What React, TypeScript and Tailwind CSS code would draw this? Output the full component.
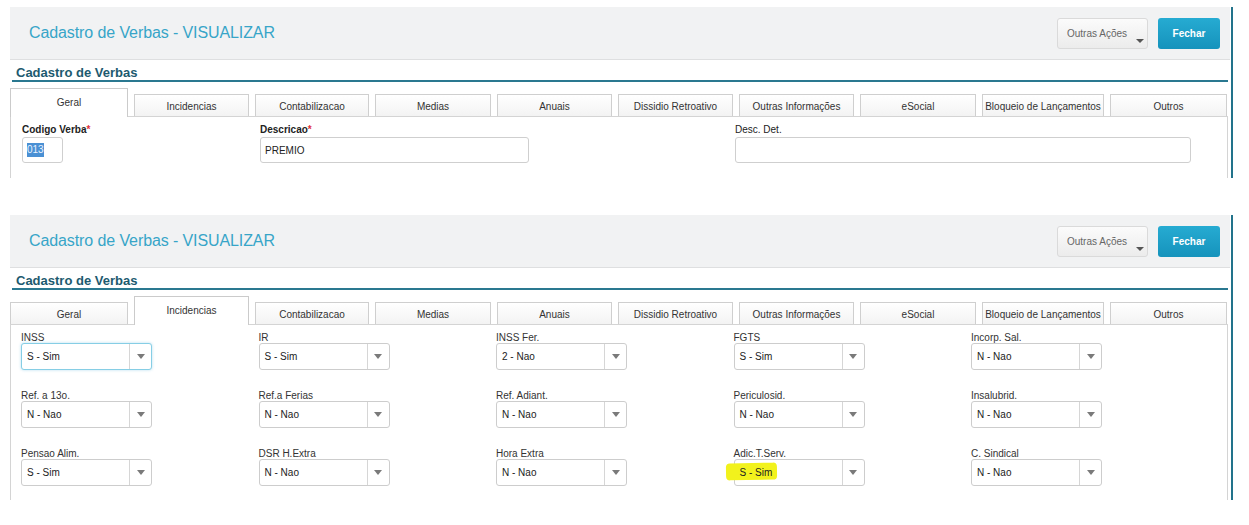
import React from 'react'

const TABS = [
  { label: 'Geral', w: 'w-[118px]' },
  { label: 'Incidencias', w: 'w-[115px]' },
  { label: 'Contabilizacao', w: 'w-[114px]' },
  { label: 'Medias', w: 'w-[116px]' },
  { label: 'Anuais', w: 'w-[115px]' },
  { label: 'Dissidio Retroativo', w: 'w-[115px]' },
  { label: 'Outras Informações', w: 'w-[115px]' },
  { label: 'eSocial', w: 'w-[116px]' },
  { label: 'Bloqueio de Lançamentos', w: 'w-[122px]' },
  { label: 'Outros', w: 'w-[117px]' },
]

const INCIDENCIAS = [
  { label: 'INSS', value: 'S - Sim', focused: true },
  { label: 'IR', value: 'S - Sim' },
  { label: 'INSS Fer.', value: '2 - Nao' },
  { label: 'FGTS', value: 'S - Sim' },
  { label: 'Incorp. Sal.', value: 'N - Nao' },
  { label: 'Ref. a 13o.', value: 'N - Nao' },
  { label: 'Ref.a Ferias', value: 'N - Nao' },
  { label: 'Ref. Adiant.', value: 'N - Nao' },
  { label: 'Periculosid.', value: 'N - Nao' },
  { label: 'Insalubrid.', value: 'N - Nao' },
  { label: 'Pensao Alim.', value: 'S - Sim' },
  { label: 'DSR H.Extra', value: 'N - Nao' },
  { label: 'Hora Extra', value: 'N - Nao' },
  { label: 'Adic.T.Serv.', value: 'S - Sim', marked: true },
  { label: 'C. Sindical', value: 'N - Nao' },
]

function Header() {
  return (
    <>
      <div className="h-[53px] bg-[#f1f2f3] border-b border-[#dedfe0] flex items-center justify-between pl-[19px] pr-[10px]">
        <span className="text-[16px] tracking-[-0.1px] text-[#37a5c8]">Cadastro de Verbas - VISUALIZAR</span>
        <div className="flex items-center gap-[10px]">
          <button className="relative w-[91px] h-[31px] rounded-[3px] border border-[#dadada] bg-gradient-to-b from-[#fbfbfb] to-[#ececec] text-left pl-[9px] pt-[1px] text-[10px] text-[#666]">
            Outras Ações
            <span className="absolute right-[3px] bottom-[5px] w-0 h-0 border-l-[4px] border-r-[4px] border-t-[4px] border-l-transparent border-r-transparent border-t-[#555]" />
          </button>
          <button className="w-[62px] h-[31px] rounded-[3px] bg-gradient-to-b from-[#26abd2] to-[#1593bc] text-[10px] font-bold text-white">
            Fechar
          </button>
        </div>
      </div>
      {/* titulo da secao */}
      <div className="mx-[2px] h-[22px] pt-[5px] pl-[4px] border-b-2 border-[#2a7890]">
        <span className="block text-[13px] leading-[15px] font-bold text-[#1d5a6f]">Cadastro de Verbas</span>
      </div>
    </>
  )
}

function Tabs({ active }: { active: string }) {
  return (
    <div className="w-[1218px] h-[35px] flex items-end gap-[6px] border-b border-[#d4d4d4]">
      {TABS.map((t) =>
        t.label === active ? (
          <div
            key={t.label}
            className={`${t.w} h-[29px] -mb-px pb-[2px] bg-white border border-b-0 border-[#cbcbcb] flex items-center justify-center text-[10px] text-[#333]`}
          >
            {t.label}
          </div>
        ) : (
          <div
            key={t.label}
            className={`${t.w} h-[22px] pt-px bg-gradient-to-b from-white to-[#f3f3f3] border border-b-0 border-[#cfcfcf] flex items-center justify-center text-[10px] text-[#333]`}
          >
            {t.label}
          </div>
        )
      )}
    </div>
  )
}

function Select({ label, value, focused, marked }: { label: string; value: string; focused?: boolean; marked?: boolean }) {
  return (
    <div>
      <div className="text-[10px] leading-[12px] text-[#333]">{label}</div>
      <div
        className={`-mt-px w-[131px] h-[27px] rounded-[3px] border flex bg-white ${
          focused ? 'border-[#86cee5] shadow-[0_0_3px_rgba(90,180,220,0.45)]' : 'border-[#cdcdcd]'
        }`}
      >
        <div className="relative flex-1 flex items-center pl-[5px] text-[10px] text-[#222]">
          {marked && (
            <span className="absolute -left-[9px] top-[3px] w-[51px] h-[17px] rounded-[4px] bg-[#f2f21c] -rotate-1" />
          )}
          <span className="relative">{value}</span>
        </div>
        <div className="w-[22px] border-l border-[#d6d6d6] flex items-center justify-center">
          <span className="w-0 h-0 border-l-[4px] border-r-[4px] border-t-[5px] border-l-transparent border-r-transparent border-t-[#7a7a7a]" />
        </div>
      </div>
    </div>
  )
}

function Label({ text, required }: { text: string; required?: boolean }) {
  return (
    <div className={`text-[10px] leading-[12px] text-[#222] ${required ? 'font-bold' : ''}`}>
      {text}
      {required && <span className="text-[#e0303a]">*</span>}
    </div>
  )
}

export default function App() {
  return (
    <div className="w-[1249px] h-[525px] bg-white font-['Liberation_Sans',Arial,sans-serif]">
      {/* tela 1 - Geral */}
      <div className="pt-[7px]">
        <div className="ml-[10px] w-[1223px] h-[171px] pr-px border-r-2 border-[#22738b] flex flex-col overflow-hidden">
          <Header />
          <Tabs active="Geral" />
          <div className="w-[1218px] flex-1 border-l border-r border-[#d4d4d4] pt-[7px] pl-[11px] flex">
            <div className="w-[238px]">
              <Label text="Codigo Verba" required />
              <div className="mt-px w-[41px] h-[26px] rounded-[3px] border border-[#cfcfcf] flex items-center pl-[4px]">
                <span className="text-[10px] leading-[14px] bg-[#4a90d4] text-[#e8f2ff]">013</span>
              </div>
            </div>
            <div className="w-[475px]">
              <Label text="Descricao" required />
              <div className="mt-px w-[269px] h-[26px] rounded-[3px] border border-[#cfcfcf] flex items-center pl-[4px] text-[10px] text-[#222]">
                PREMIO
              </div>
            </div>
            <div>
              <Label text="Desc. Det." />
              <div className="mt-px w-[456px] h-[26px] rounded-[3px] border border-[#cfcfcf]" />
            </div>
          </div>
        </div>
      </div>

      {/* tela 2 - Incidencias */}
      <div className="pt-[37px]">
        <div className="ml-[10px] w-[1223px] h-[285px] pr-px border-r-2 border-[#22738b] flex flex-col overflow-hidden">
          <Header />
          <Tabs active="Incidencias" />
          <div className="w-[1218px] flex-1 border-l border-r border-[#d4d4d4] pt-[7px] pl-[10px]">
            <div className="grid grid-cols-[repeat(5,237.5px)] gap-y-[20px]">
              {INCIDENCIAS.map((f) => (
                <Select key={f.label} label={f.label} value={f.value} focused={f.focused} marked={f.marked} />
              ))}
            </div>
          </div>
        </div>
      </div>
    </div>
  )
}
